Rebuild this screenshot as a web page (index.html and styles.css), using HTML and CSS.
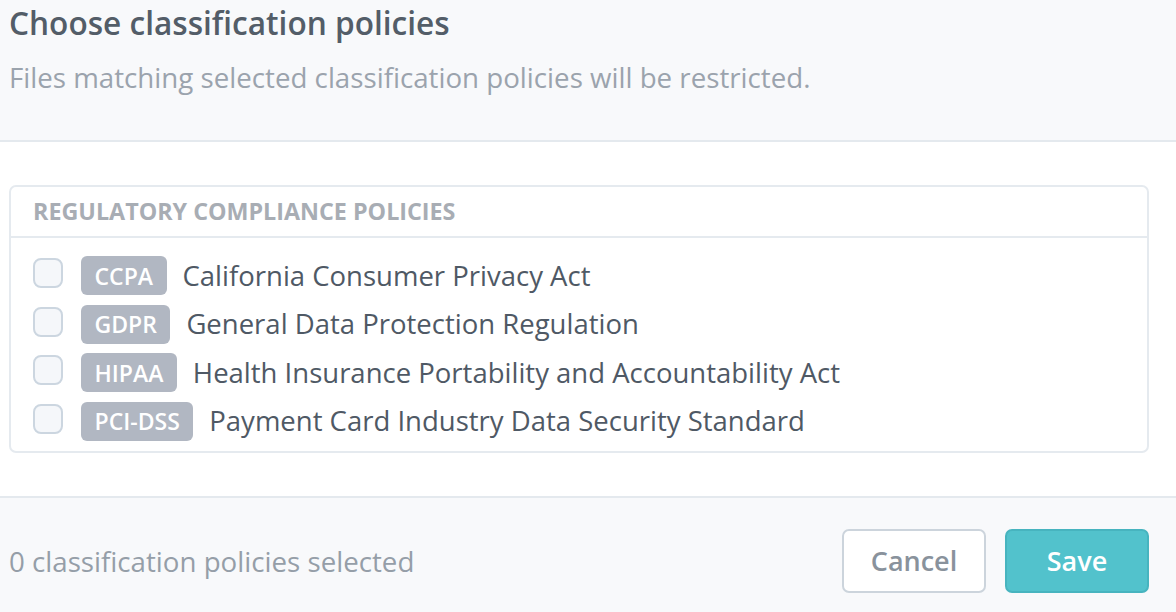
FILE: index.html
```html
<!DOCTYPE html>
<html lang="en">
<head>
<meta charset="utf-8">
<title>Choose classification policies</title>
<link rel="stylesheet" href="styles.css">
</head>
<body>
<div class="dialog">
  <header class="dialog-header">
    <h1 class="title">Choose classification policies</h1>
    <p class="subtitle">Files matching selected classification policies will be restricted.</p>
  </header>
  <main class="dialog-body">
    <section class="policy-box">
      <div class="policy-box-header">Regulatory Compliance Policies</div>
      <ul class="policy-list">
        <li class="policy-row">
          <label class="policy-label">
            <input type="checkbox" class="check">
            <span class="badge">CCPA</span>
            <span class="policy-name">California Consumer Privacy Act</span>
          </label>
        </li>
        <li class="policy-row">
          <label class="policy-label">
            <input type="checkbox" class="check">
            <span class="badge">GDPR</span>
            <span class="policy-name">General Data Protection Regulation</span>
          </label>
        </li>
        <li class="policy-row">
          <label class="policy-label">
            <input type="checkbox" class="check">
            <span class="badge">HIPAA</span>
            <span class="policy-name">Health Insurance Portability and Accountability Act</span>
          </label>
        </li>
        <li class="policy-row">
          <label class="policy-label">
            <input type="checkbox" class="check">
            <span class="badge">PCI-DSS</span>
            <span class="policy-name">Payment Card Industry Data Security Standard</span>
          </label>
        </li>
      </ul>
    </section>
  </main>
  <footer class="dialog-footer">
    <span class="selected-count">0 classification policies selected</span>
    <div class="actions">
      <button type="button" class="btn btn-cancel">Cancel</button>
      <button type="button" class="btn btn-save">Save</button>
    </div>
  </footer>
</div>
</body>
</html>
```
FILE: styles.css
```css
* { box-sizing: border-box; }

html, body {
  margin: 0;
  padding: 0;
  background: #ffffff;
}

body {
  font-family: "Open Sans", "Noto Sans", sans-serif;
  color: #4d5763;
}

.dialog {
  width: 1176px;
  height: 612px;
  display: flex;
  flex-direction: column;
  overflow: hidden;
}

/* Header */
.dialog-header {
  height: 142px;
  background: #f8f9fb;
  border-bottom: 2px solid #e4e9ee;
  padding: 3px 27px 0 9px;
}

.title {
  margin: 0;
  font-size: 31.6px;
  line-height: 40px;
  font-weight: 600;
  color: #535d68;
}

.subtitle {
  margin: 16px 0 0;
  font-size: 27.7px;
  line-height: 36px;
  font-weight: 400;
  color: #9ba3ad;
}

/* Body */
.dialog-body {
  padding: 43px 27px 43px 9px;
  background: #ffffff;
}

.policy-box {
  border: 2px solid #e5eaef;
  border-radius: 7px;
}

.policy-box-header {
  padding: 8px 22px 9px;
  font-size: 23.3px;
  line-height: 32px;
  font-weight: 700;
  text-transform: uppercase;
  color: #a8adb4;
  border-bottom: 2px solid #e5eaef;
}

.policy-list {
  list-style: none;
  margin: 0;
  padding: 18px 22px 10px;
  display: flex;
  flex-direction: column;
  gap: 9.5px;
}

.policy-row {
  height: 39px;
}

.policy-label {
  display: flex;
  align-items: center;
  height: 39px;
  cursor: pointer;
}

.check {
  appearance: none;
  -webkit-appearance: none;
  margin: -5px 18px 0 0;
  width: 30px;
  height: 30px;
  border: 2px solid #ccd6e0;
  border-radius: 8px;
  background: #f5f7fa;
  flex: none;
}

.badge {
  display: inline-flex;
  align-items: center;
  height: 39px;
  padding: 0 13.5px;
  border-radius: 6px;
  background: #b1b7c2;
  color: #ffffff;
  font-size: 23px;
  font-weight: 600;
  flex: none;
}

.policy-name {
  margin-left: 16px;
  font-size: 27.5px;
  line-height: 36px;
  color: #4f5965;
}

/* Footer */
.dialog-footer {
  flex: 1;
  background: #f8f9fb;
  border-top: 2px solid #e4e9ee;
  padding: 31px 27px 0 9px;
  display: flex;
  align-items: flex-start;
  justify-content: space-between;
}

.selected-count {
  font-size: 27.7px;
  line-height: 64px;
  color: #959ea8;
}

.actions {
  display: flex;
  gap: 19px;
}

.btn {
  width: 144px;
  height: 64px;
  border-radius: 7px;
  font-family: "Open Sans", "Noto Sans", sans-serif;
  font-size: 27px;
  font-weight: 600;
  cursor: pointer;
  padding: 0;
}

.btn-cancel {
  background: #ffffff;
  border: 2px solid #ccd4dc;
  color: #89929c;
}

.btn-save {
  background: #52c2cc;
  border: 2px solid #47b4bf;
  color: #ffffff;
}
```
